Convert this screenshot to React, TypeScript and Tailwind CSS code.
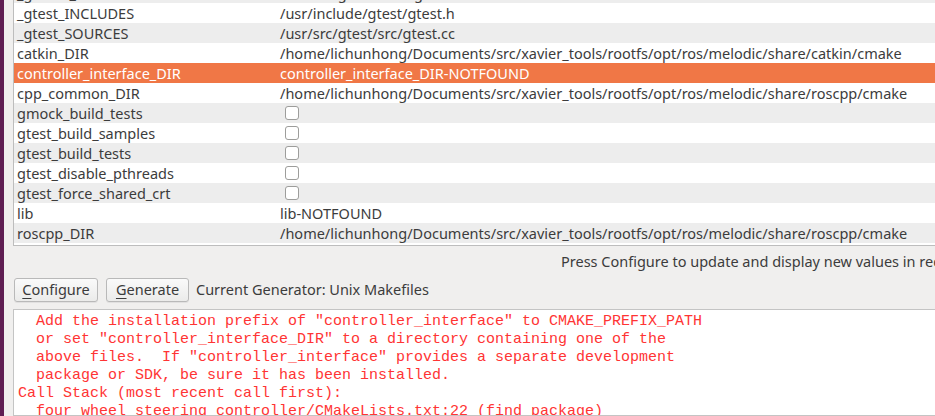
import React from 'react';

type Row = { name: string; value?: string; check?: boolean };

const rows: Row[] = [
    { name: '_gmock_SOURCES', value: '/usr/src/gmock/src/gmock-all.cc' },
    { name: '_gtest_INCLUDES', value: '/usr/include/gtest/gtest.h' },
    { name: '_gtest_SOURCES', value: '/usr/src/gtest/src/gtest.cc' },
    { name: 'catkin_DIR', value: '/home/lichunhong/Documents/src/xavier_tools/rootfs/opt/ros/melodic/share/catkin/cmake' },
    { name: 'controller_interface_DIR', value: 'controller_interface_DIR-NOTFOUND' },
    { name: 'cpp_common_DIR', value: '/home/lichunhong/Documents/src/xavier_tools/rootfs/opt/ros/melodic/share/roscpp/cmake' },
    { name: 'gmock_build_tests', check: true },
    { name: 'gtest_build_samples', check: true },
    { name: 'gtest_build_tests', check: true },
    { name: 'gtest_disable_pthreads', check: true },
    { name: 'gtest_force_shared_crt', check: true },
    { name: 'lib', value: 'lib-NOTFOUND' },
    { name: 'roscpp_DIR', value: '/home/lichunhong/Documents/src/xavier_tools/rootfs/opt/ros/melodic/share/roscpp/cmake' },
];

const output = [
    '  Add the installation prefix of "controller_interface" to CMAKE_PREFIX_PATH',
    '  or set "controller_interface_DIR" to a directory containing one of the',
    '  above files.  If "controller_interface" provides a separate development',
    '  package or SDK, be sure it has been installed.',
    'Call Stack (most recent call first):',
    '  four_wheel_steering_controller/CMakeLists.txt:22 (find_package)',
];

const SELECTED = 'controller_interface_DIR';

function Button({ mnemonic, rest, width }: { mnemonic: string; rest: string; width: string }) {
    return (
        <button
            className={`${width} h-[24px] rounded-[3px] border border-[#b9b9b9] bg-gradient-to-b from-[#fafafa] to-[#ebebea] text-[14.5px] text-[#3c3c3c] flex items-center justify-center shadow-[0_1px_0_rgba(0,0,0,0.06)]`}
        >
            <span className="underline underline-offset-[3px] decoration-[1px]">{mnemonic}</span>
            {rest}
        </button>
    );
}

export default function App() {
    return (
        <div
            className="w-[935px] h-[416px] overflow-hidden flex bg-[#f0efee] text-[#3c3c3c]"
            style={{ fontFamily: '"Noto Sans", "Open Sans", sans-serif' }}
        >
            {/* desktop edge */}
            <div className="w-[4px] shrink-0 bg-[#5f1e52]" />

            <div className="pl-[9px] flex flex-col shrink-0 w-[1000px]">
                {/* cache table, scrolled */}
                <div className="h-[246px] shrink-0 overflow-hidden bg-white border-l border-b border-r border-[#bdbdbd]">
                    <div className="mt-[-17px]">
                        {rows.map((r, i) => {
                            const sel = r.name === SELECTED;
                            const bg = sel ? 'bg-[#f07746] text-white' : i % 2 === 0 ? 'bg-[#ededed]' : 'bg-white';
                            return (
                                <div key={r.name} className={`h-[20px] grid grid-cols-[263px_1fr] items-center text-[14.5px] leading-[20px] ${bg}`}>
                                    <div className="pl-[3px] whitespace-nowrap">{r.name}</div>
                                    <div className="pl-[3px] whitespace-nowrap flex items-center">
                                        {r.check ? (
                                            <span className="ml-[5px] w-[14px] h-[14px] rounded-[3px] border border-[#9d9d9b] bg-white" />
                                        ) : (
                                            r.value
                                        )}
                                    </div>
                                </div>
                            );
                        })}
                    </div>
                </div>

                {/* hint line */}
                <div className="h-[32px] shrink-0 flex items-center pl-[548px] text-[14.5px] whitespace-nowrap">
                    Press Configure to update and display new values in red, then press Generate to generate selected build files.
                </div>

                {/* buttons */}
                <div className="h-[24px] shrink-0 flex items-center gap-[8px] pl-[1px]">
                    <Button mnemonic="C" rest="onfigure" width="w-[84px]" />
                    <Button mnemonic="G" rest="enerate" width="w-[83px]" />
                    <span className="ml-[-1px] text-[14.5px] whitespace-nowrap">Current Generator: Unix Makefiles</span>
                </div>

                {/* output */}
                <div className="relative mt-[7px] flex-1 bg-white border border-[#c4c4c4] pt-[3px] pl-[4px] overflow-hidden">
                    {output.map((l, i) => (
                        <div
                            key={i}
                            className="whitespace-pre text-[15px] leading-[18px] text-[#ff3434]"
                            style={{ fontFamily: '"Liberation Mono", monospace' }}
                        >
                            {l}
                        </div>
                    ))}
                </div>
            </div>
        </div>
    );
}
